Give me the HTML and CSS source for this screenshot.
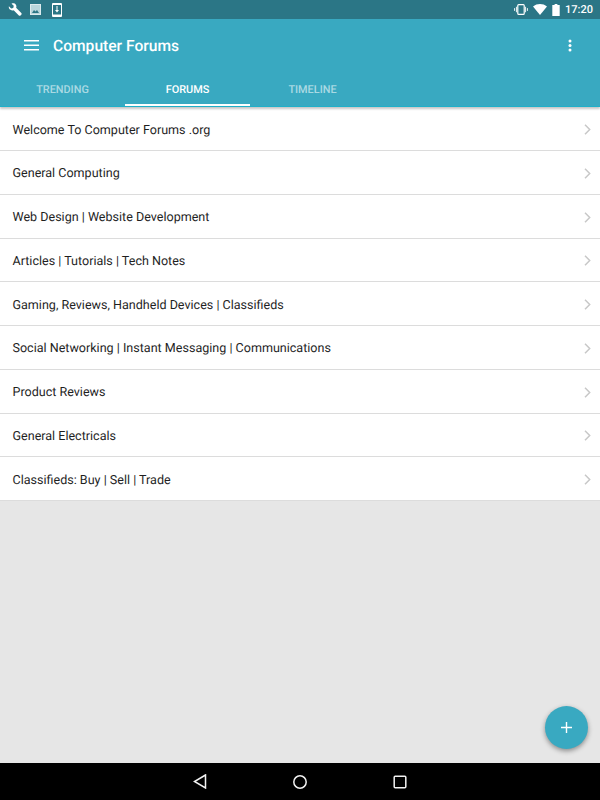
FILE: index.html
```html
<!DOCTYPE html>
<html>
<head>
<meta charset="utf-8">
<title>Computer Forums</title>
<link rel="stylesheet" href="styles.css">
</head>
<body>
<div class="screen">
  <div class="status">
    <div class="status-icons">
      <svg class="ic-wrench" width="14" height="14" viewBox="0 0 16 16"><path fill="#fff" d="M1 3.600 3.600 6.200 6 5.600 6.600 3.200 4 .8C5.800 0 8 .5 9 2c.7 1.100.8 2.400.3 3.500L15.200 11.400c.6.6.6 1.300 0 1.900l-.9.9c-.6.6-1.300.6-1.900 0L6.500 8.300C5.300 8.800 3.900 8.600 2.800 7.800 1.300 6.800.6 5.200 1 3.600Z"/></svg>
      <svg class="ic-image" width="11" height="11" viewBox="0 0 11 11"><rect x=".5" y=".5" width="10" height="10" fill="#b9d6dc" stroke="#dcebee"/><path fill="#2b7686" d="M2 9 4 6l1.500 1.500L7 6l2 3Z"/></svg>
      <svg class="ic-download" width="10" height="14" viewBox="0 0 10 14"><rect width="10" height="14" rx="1" fill="#fff"/><rect x="1" y="2" width="8" height="9.500" fill="#2b7686"/><path fill="#fff" d="M4.500 3h1v4H7L5 9.500 3 7h1.500Z"/></svg>
    </div>
    <div class="status-right">
      <svg width="14" height="11" viewBox="0 0 15 12"><rect x="4" y=".7" width="7" height="10.600" rx="1" fill="none" stroke="#fff" stroke-width="1.300"/><path fill="none" stroke="#fff" d="M2.500 3v6M12.500 3v6M.5 4.500v3M14.500 4.500v3"/></svg>
      <svg width="14" height="11" viewBox="0 0 14 11"><path fill="#fff" d="M0 2.500C4-.8 10-.8 14 2.500L7 11Z"/></svg>
      <svg width="8" height="12" viewBox="0 0 8 13"><path fill="#fff" d="M2.500 0h3v1H8v12H0V1h2.500Z"/></svg>
      <span class="clock">17:20</span>
    </div>
  </div>
  <header class="appbar">
    <div class="toolbar">
      <svg class="menu" width="15" height="11" viewBox="0 0 15 11"><path fill="#fff" d="M0 0h15v1.500H0zM0 4.500h15V6H0zM0 9h15v1.500H0z"/></svg>
      <h1 class="title">Computer Forums</h1>
      <svg class="more" width="4" height="13" viewBox="0 0 4 13"><circle cx="2" cy="2" r="1.500" fill="#fff"/><circle cx="2" cy="6.500" r="1.500" fill="#fff"/><circle cx="2" cy="11" r="1.500" fill="#fff"/></svg>
    </div>
    <nav class="tabs">
      <div class="tab">TRENDING</div>
      <div class="tab active">FORUMS</div>
      <div class="tab">TIMELINE</div>
    </nav>
  </header>
  <main class="content">
    <ul class="list">
      <li class="row"><span>Welcome To Computer Forums .org</span><svg class="chev" width="7" height="11" viewBox="0 0 7 11"><path d="M1 .8 5.700 5.500 1 10.200" fill="none" stroke="#c8c8c8" stroke-width="1.500"/></svg></li>
      <li class="row"><span>General Computing</span><svg class="chev" width="7" height="11" viewBox="0 0 7 11"><path d="M1 .8 5.700 5.500 1 10.200" fill="none" stroke="#c8c8c8" stroke-width="1.500"/></svg></li>
      <li class="row"><span>Web Design | Website Development</span><svg class="chev" width="7" height="11" viewBox="0 0 7 11"><path d="M1 .8 5.700 5.500 1 10.200" fill="none" stroke="#c8c8c8" stroke-width="1.500"/></svg></li>
      <li class="row"><span>Articles | Tutorials | Tech Notes</span><svg class="chev" width="7" height="11" viewBox="0 0 7 11"><path d="M1 .8 5.700 5.500 1 10.200" fill="none" stroke="#c8c8c8" stroke-width="1.500"/></svg></li>
      <li class="row"><span>Gaming, Reviews, Handheld Devices | Classifieds</span><svg class="chev" width="7" height="11" viewBox="0 0 7 11"><path d="M1 .8 5.700 5.500 1 10.200" fill="none" stroke="#c8c8c8" stroke-width="1.500"/></svg></li>
      <li class="row"><span>Social Networking | Instant Messaging | Communications</span><svg class="chev" width="7" height="11" viewBox="0 0 7 11"><path d="M1 .8 5.700 5.500 1 10.200" fill="none" stroke="#c8c8c8" stroke-width="1.500"/></svg></li>
      <li class="row"><span>Product Reviews</span><svg class="chev" width="7" height="11" viewBox="0 0 7 11"><path d="M1 .8 5.700 5.500 1 10.200" fill="none" stroke="#c8c8c8" stroke-width="1.500"/></svg></li>
      <li class="row"><span>General Electricals</span><svg class="chev" width="7" height="11" viewBox="0 0 7 11"><path d="M1 .8 5.700 5.500 1 10.200" fill="none" stroke="#c8c8c8" stroke-width="1.500"/></svg></li>
      <li class="row"><span>Classifieds: Buy | Sell | Trade</span><svg class="chev" width="7" height="11" viewBox="0 0 7 11"><path d="M1 .8 5.700 5.500 1 10.200" fill="none" stroke="#c8c8c8" stroke-width="1.500"/></svg></li>
    </ul>
    <button class="fab" aria-label="Add"><svg width="11" height="11" viewBox="0 0 11 11"><path fill="#fff" d="M4.800 0h1.400v4.800H11v1.400H6.200V11H4.800V6.200H0V4.800h4.800Z"/></svg></button>
  </main>
  <footer class="navbar">
    <svg width="14" height="15" viewBox="0 0 14 15"><path d="M12.500 1 1.500 7.500 12.500 14Z" fill="none" stroke="#f2f2f2" stroke-width="1.500"/></svg>
    <svg width="14" height="14" viewBox="0 0 14 14"><circle cx="7" cy="7" r="6.200" fill="none" stroke="#f2f2f2" stroke-width="1.500"/></svg>
    <svg width="14" height="14" viewBox="0 0 14 14"><rect x="1.200" y="1.200" width="11.600" height="11.600" rx="1" fill="none" stroke="#f2f2f2" stroke-width="1.500"/></svg>
  </footer>
</div>
</body>
</html>
```
FILE: styles.css
```css
* { box-sizing: border-box; }
html, body { margin: 0; padding: 0; }
body { font-family: Roboto, "Liberation Sans", sans-serif; text-rendering: geometricPrecision; }
.screen { width: 600px; height: 800px; display: flex; flex-direction: column; overflow: hidden; background: #e6e6e6; }
.status { height: 19px; flex: none; background: #2b7686; display: flex; align-items: center; justify-content: space-between; padding: 0 7px 0 8px; color: #fff; }
.status-icons { display: flex; align-items: center; }
.ic-image { margin-left: 8px; }
.ic-download { margin-left: 11px; }
.status-right { display: flex; align-items: center; gap: 5px; }
.clock { font-size: 11px; font-weight: 500; }
.appbar { flex: none; height: 88px; background: #39a9c1; display: flex; flex-direction: column; box-shadow: 0 2px 2px rgba(0,0,0,.22); position: relative; z-index: 1; border-bottom: 1px solid #1fb0c9; }
.toolbar { height: 52px; display: flex; align-items: center; padding: 0 28px 0 24px; color: #fff; }
.menu { flex: none; }
.title { margin: 1px 0 0 14px; font-size: 15.600px; font-weight: 500; flex: 1; }
.tabs { display: flex; flex: 1; }
.tab { width: 125px; display: flex; align-items: center; justify-content: center; font-size: 10.900px; font-weight: 500; color: rgba(255,255,255,.58); padding-top: 1px; }
.tab.active { color: #fff; border-bottom: 2px solid #fff; padding-top: 3px; }
.content { flex: 1; position: relative; min-height: 0; }
.list { list-style: none; margin: 0; padding: .3px 0 0; background: #fff; }
.row { height: 43.750px; display: flex; align-items: center; justify-content: space-between; padding: 3px 9px 0 12.500px; font-size: 12.550px; color: #1f1f1f; border-bottom: 1px solid #dcdcdc; }
.chev { flex: none; margin-top: -1px; }
.fab { position: absolute; right: 12px; bottom: 14px; width: 43px; height: 43px; border: 0; padding: 0; border-radius: 50%; background: #39a9c1; display: flex; align-items: center; justify-content: center; box-shadow: 0 2px 5px rgba(0,0,0,.4); }
.navbar { flex: none; height: 37px; background: #000; display: flex; align-items: center; justify-content: center; gap: 86px; }
```
